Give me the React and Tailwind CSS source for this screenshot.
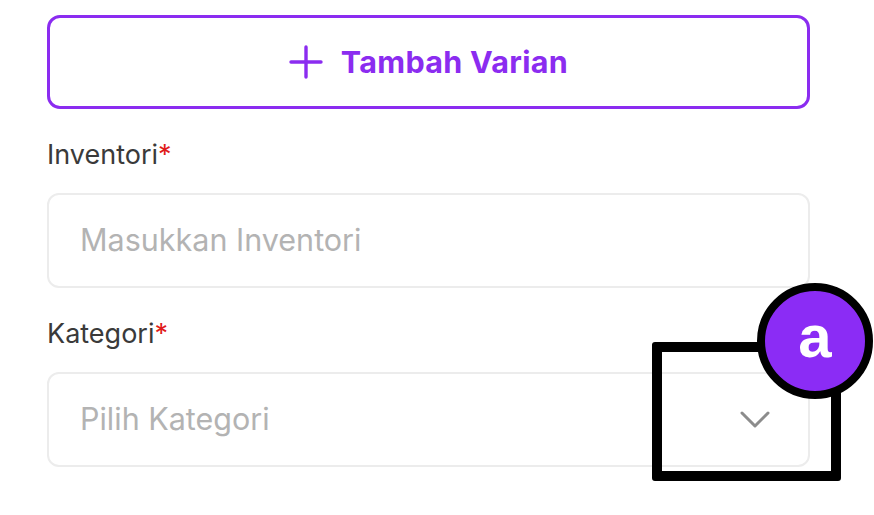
import React from "react";

export default function App() {
  return (
    <div className="relative w-[874px] h-[515px] bg-white overflow-hidden" style={{ fontFamily: "Inter, 'Noto Sans', sans-serif" }}>
      <div className="ml-[47px] w-[763px] pt-[15px] flex flex-col">
        <button className="h-[94px] w-full rounded-[13px] border-[3px] border-[#8b2cf0] flex items-center justify-center gap-[18px] text-[#8b2cf0]">
          <svg width="34" height="34" viewBox="0 0 34 34" fill="none" stroke="#8b2cf0" strokeWidth="3.4" strokeLinecap="round">
            <path d="M17 2v30M2 17h30" />
          </svg>
          <span className="text-[30.5px] font-bold tracking-[0.3px]">Tambah Varian</span>
        </button>

        <div className="mt-[28px] text-[27px] text-[#3a3a3a] leading-[36px]">
          Inventori<span className="text-[#e01b1b]">*</span>
        </div>
        <div className="mt-[20px] h-[95px] rounded-[12px] border-2 border-[#ececec] flex items-center pl-[31px]">
          <span className="text-[30.5px] text-[#b3b3b3] leading-none">Masukkan Inventori</span>
        </div>

        <div className="mt-[28px] text-[27px] text-[#3a3a3a] leading-[36px]">
          Kategori<span className="text-[#e01b1b]">*</span>
        </div>
        <div className="mt-[20px] h-[95px] rounded-[12px] border-2 border-[#ececec] flex items-center pl-[31px] pr-[38px] justify-between">
          <span className="text-[30.5px] text-[#b3b3b3] leading-none">Pilih Kategori</span>
          <svg width="30" height="18" viewBox="0 0 30 18" fill="none" stroke="#8c8c8c" strokeWidth="3" strokeLinecap="round" strokeLinejoin="round">
            <path d="M2 2l13 13L28 2" />
          </svg>
        </div>
      </div>

      <div className="absolute left-[652px] top-[342px] w-[189px] h-[139px] border-[10px] border-black rounded-[3px]" />
      <div className="absolute left-[757px] top-[283px] w-[116px] h-[116px] rounded-full bg-[#8b2cf5] border-[8px] border-black flex items-center justify-center">
        <span className="text-white font-bold text-[60px] leading-none -mt-[8px]" style={{ fontFamily: "'Liberation Sans', Arial, sans-serif" }}>a</span>
      </div>
    </div>
  );
}
